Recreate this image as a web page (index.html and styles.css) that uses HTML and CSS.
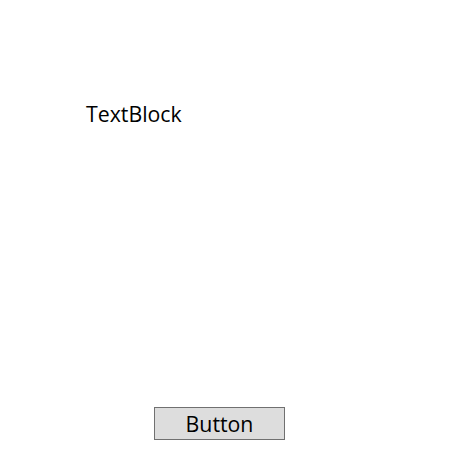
FILE: index.html
```html
<!DOCTYPE html>
<html>
<head>
<meta charset="utf-8">
<link rel="stylesheet" href="styles.css">
</head>
<body>
<div class="page">
  <div class="text-block">TextBlock</div>
  <div class="spacer"></div>
  <div class="button-row"><button class="btn">Button</button></div>
</div>
</body>
</html>
```

FILE: styles.css
```css
html, body {
  margin: 0;
  padding: 0;
  background: #ffffff;
}
.page {
  width: 469px;
  height: 472px;
  display: flex;
  flex-direction: column;
  font-family: "Open Sans", "Noto Sans", sans-serif;
  color: #000;
}
.text-block {
  margin: 100px 0 0 86px;
  font-size: 21.3px;
  line-height: 28px;
}
.spacer {
  flex: 1;
}
.button-row {
  padding: 0 0 32px 154px;
}
.btn {
  width: 131px;
  height: 33px;
  margin: 0;
  padding: 0;
  box-sizing: border-box;
  border: 1px solid #707070;
  background: #dddddd;
  font-family: "Open Sans", "Noto Sans", sans-serif;
  font-size: 21.3px;
  color: #000;
  line-height: 31px;
  display: block;
}
```
